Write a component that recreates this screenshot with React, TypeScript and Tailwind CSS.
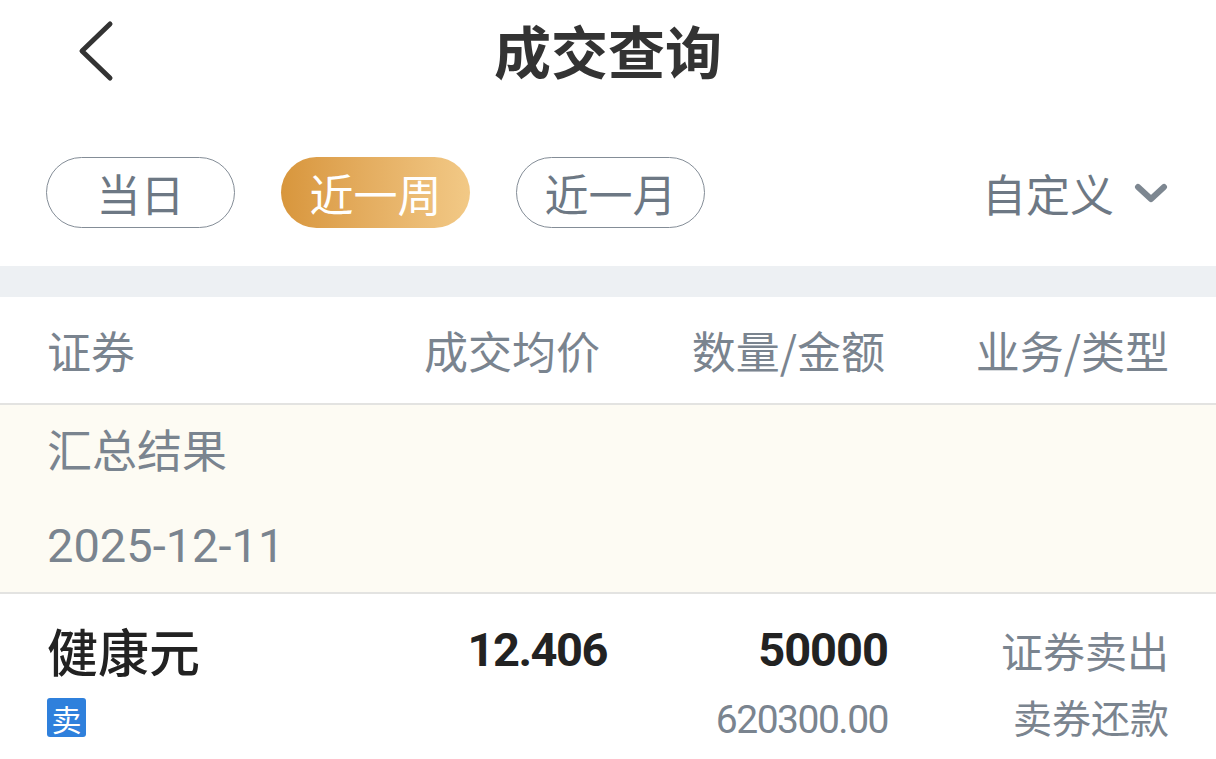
const cjk = "font-['Noto_Sans_CJK_SC','Noto_Sans',sans-serif]";
const num = "font-['Roboto','Noto_Sans_CJK_SC',sans-serif]";

const Pill = ({ label, active }: { label: string; active?: boolean }) => (
  <div
    className={
      active
        ? "flex h-[71px] w-[189px] items-center justify-center rounded-full bg-gradient-to-r from-[#d8963c] to-[#f2c986] text-[44px] text-white"
        : "flex h-[71px] w-[189px] items-center justify-center rounded-full border border-[#848d97] text-[44px] text-[#6d7884]"
    }
  >
    {label}
  </div>
);

const App = () => {
  return (
    <div className={`h-[759px] w-[1216px] overflow-hidden bg-white ${cjk}`}>
      {/* nav bar */}
      <div className="relative flex h-[104px] items-center justify-center">
        <svg
          className="absolute left-[74px] top-[20px] h-[62px] w-[42px]"
          viewBox="0 0 42 62"
          fill="none"
          stroke="#333333"
          strokeWidth="5"
          strokeLinecap="round"
          strokeLinejoin="round"
        >
          <path d="M36 4 L8 31 L36 58" />
        </svg>
        <h1 className="-mt-[6px] text-[57px] font-bold leading-none text-[#333333]">成交查询</h1>
      </div>

      {/* period filter */}
      <div className="flex items-center px-[46px] pb-[38px] pt-[53px]">
        <div className="flex gap-[46px]">
          <Pill label="当日" />
          <Pill label="近一周" active />
          <Pill label="近一月" />
        </div>
        <div className="ml-auto flex items-center gap-[20px] pr-[2px] text-[44px] text-[#6d7884]">
          <span>自定义</span>
          <svg className="h-[20px] w-[34px]" viewBox="0 0 34 20" fill="none" stroke="#7d8791" strokeWidth="6" strokeLinecap="round" strokeLinejoin="round">
            <path d="M4 4 L17 16 L30 4" />
          </svg>
        </div>
      </div>

      <div className="h-[31px] bg-[#edf0f3]" />

      {/* table header */}
      <div className="grid h-[108px] grid-cols-[283px_270px_285px_284px] items-center border-b-2 border-[#e3e3e1] px-[47px] text-[44px] text-[#7a848f]">
        <span>证券</span>
        <span className="text-right">成交均价</span>
        <span className="text-right">数量/金额</span>
        <span className="text-right">业务/类型</span>
      </div>

      {/* summary */}
      <div className="flex h-[189px] flex-col border-b-2 border-[#e3e3e1] bg-[#fdfbf3] px-[47px] text-[#7a848f]">
        <div className="pt-[14px] text-[45px] leading-[60px]">汇总结果</div>
        <div className={`mt-[37px] text-[47px] leading-[60px] ${num}`}>2025-12-11</div>
      </div>

      {/* record */}
      <div className="grid grid-cols-[283px_270px_285px_284px] px-[47px] pt-[24px]">
        <div className="flex flex-col">
          <span className="text-[51px] font-medium leading-[64px] text-[#222222]">健康元</span>
          <span className="mt-[16px] flex h-[39px] w-[39px] items-center justify-center rounded-[3px] bg-[#2f80dc] text-[30px] leading-none text-white">
            卖
          </span>
        </div>
        <div className={`-mr-[7px] text-right text-[47px] font-bold leading-[64px] tracking-[-1.5px] text-[#222222] ${num}`}>12.406</div>
        <div className="-mr-[3px] flex flex-col items-end">
          <span className={`text-[47px] font-bold leading-[64px] tracking-[-1px] text-[#222222] ${num}`}>50000</span>
          <span className={`mt-[8px] text-[39px] leading-[60px] tracking-[-1.5px] text-[#7a848f] ${num}`}>620300.00</span>
        </div>
        <div className="flex flex-col items-end text-[42px] text-[#7a848f]">
          <span className="leading-[64px]">证券卖出</span>
          <span className="mt-[4px] text-[39px] leading-[60px]">卖券还款</span>
        </div>
      </div>
    </div>
  );
};

export default App;
